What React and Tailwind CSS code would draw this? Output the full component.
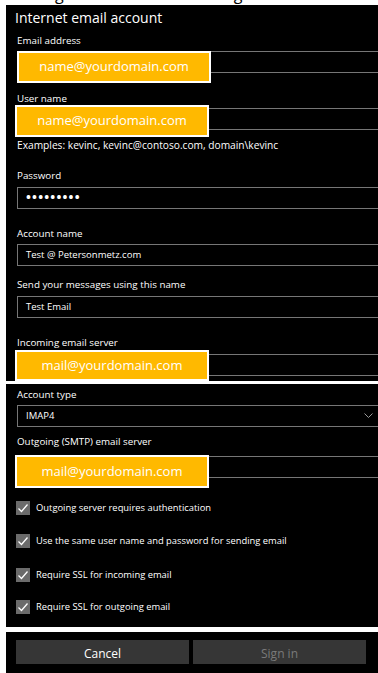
import React from "react";

function Overlay({ text, pos }) {
  return (
    <div
      className={`absolute ${pos} flex w-[194px] items-center justify-center border-2 border-white bg-[#ffb900] text-[13px] text-white`}
    >
      {text}
    </div>
  );
}

function Input({ value, className = "", children }) {
  return (
    <div
      className={`relative flex h-[22px] w-[380px] items-center border border-[#767676] pl-[8px] text-[9.5px] text-white ${className}`}
    >
      {value}
      {children}
    </div>
  );
}

function Label({ text, className = "" }) {
  return (
    <div className={`h-[16px] text-[9.8px] leading-[16px] text-white ${className}`}>{text}</div>
  );
}

function Check({ text, className = "" }) {
  return (
    <div className={`flex h-[20px] items-center ${className}`}>
      <div className="flex h-[14px] w-[14px] items-center justify-center bg-[#6b6b6b]">
        <svg width="12" height="12" viewBox="0 0 12 12" fill="none">
          <path d="M1.5 6.5 L4.5 9.5 L10.5 2.5" stroke="white" strokeWidth="1.3" />
        </svg>
      </div>
      <span className="ml-[6px] text-[9.4px] text-white">{text}</span>
    </div>
  );
}

export default function App() {
  return (
    <div className="relative h-[673px] w-[378px] overflow-hidden bg-white font-['Open_Sans','Noto_Sans',sans-serif]">
      <div className="h-[5px] overflow-hidden">
        <div className="mt-[-15px] flex text-[16px] leading-[18px] text-black">
          <span className="ml-[55px]">g</span>
          <span className="ml-[170px]">g</span>
        </div>
      </div>

      {/* Panel 1 */}
      <div className="ml-[6px] h-[376px] overflow-hidden bg-black px-[11px]">
        <div className="ml-[-2px] h-[26px] text-[14px] leading-[26px] text-white">
          Internet email account
        </div>
        <Label text="Email address" className="mt-[2px]" />
        <Input className="mt-[2px]">
          <Overlay text="name@yourdomain.com" pos="-top-px -left-px h-[32px]" />
        </Input>
        <Label text="User name" className="mt-[18px]" />
        <Input className="mt-[1px]">
          <Overlay text="name@yourdomain.com" pos="-top-[4px] -left-[3px] h-[32px]" />
        </Input>
        <Label text="Examples: kevinc, kevinc@contoso.com, domain\kevinc" className="mt-[7px] text-[10.2px]" />
        <Label text="Password" className="mt-[15px]" />
        <Input className="mt-[3px] text-[13px] font-bold tracking-[1.2px]" value="•••••••••" />
        <Label text="Account name" className="mt-[17px]" />
        <Input className="mt-[2px]" value="Test @ Petersonmetz.com" />
        <Label text="Send your messages using this name" className="mt-[11px]" />
        <Input className="mt-[3px]" value="Test Email" />
        <Label text="Incoming email server" className="mt-[17px]" />
        <Input className="mt-[3px]">
          <Overlay text="mail@yourdomain.com" pos="-top-[5px] -left-[3px] h-[31px]" />
        </Input>
      </div>

      {/* Panel 2 */}
      <div className="ml-[6px] mt-[3px] h-[243px] overflow-hidden bg-black px-[11px] pt-[3px]">
        <Label text="Account type" />
        <div className="mt-[2px] flex h-[22px] w-[363px] items-center justify-between border border-[#767676] pl-[8px] pr-[6px] text-[9.5px] text-white">
          <span>IMAP4</span>
          <svg width="9" height="6" viewBox="0 0 9 6" fill="none">
            <path d="M0.5 0.5 L4.5 4.5 L8.5 0.5" stroke="#9a9a9a" strokeWidth="1" />
          </svg>
        </div>
        <Label text="Outgoing (SMTP) email server" className="mt-[7px]" />
        <Input className="mt-[6px]">
          <Overlay text="mail@yourdomain.com" pos="-top-[2px] -left-[3px] h-[33px]" />
        </Input>
        <Check text="Outgoing server requires authentication" className="mt-[20px] -ml-px" />
        <Check text="Use the same user name and password for sending email" className="mt-[13px] -ml-px" />
        <Check text="Require SSL for incoming email" className="mt-[14px] -ml-px" />
        <Check text="Require SSL for outgoing email" className="mt-[12px] -ml-px" />
      </div>

      {/* Panel 3 */}
      <div className="ml-[6px] mt-[5px] flex h-[41px] gap-[4px] bg-black pl-[10px] pt-[8px]">
        <div className="flex h-[24px] w-[173px] items-center justify-center bg-[#363636] pt-[3px] text-[12px] text-white">
          Cancel
        </div>
        <div className="flex h-[24px] w-[173px] items-center justify-center bg-[#363636] pt-[3px] text-[12px] text-[#7a7a7a]">
          Sign in
        </div>
      </div>
    </div>
  );
}
